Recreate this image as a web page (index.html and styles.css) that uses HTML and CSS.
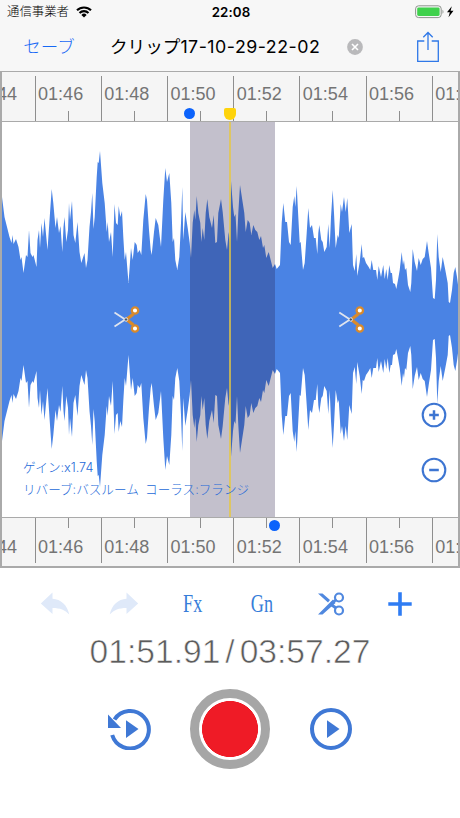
FILE: index.html
```html
<!DOCTYPE html>
<html lang="ja">
<head>
  <meta charset="UTF-8">
  <meta name="viewport" content="width=device-width, initial-scale=1.0">
  <title>クリップ17-10-29-22-02</title>
  <link rel="stylesheet" href="styles.css">
</head>
<body>
  <header>
    <div class="status-bar">
      <div class="carrier">
        <span>通信事業者</span>
        <svg width="16" height="12" viewBox="0 0 16 12" fill="none" stroke="#000" stroke-width="2.1">
          <path d="M1 4.3a10 10 0 0 1 14 0M3.5 7a6.4 6.4 0 0 1 9 0"/>
          <path d="M8 11.5 5.4 8.9a3.7 3.7 0 0 1 5.2 0z" fill="#000" stroke="none"/>
        </svg>
      </div>
      <span class="clock">22:08</span>
      <div class="battery">
        <svg width="40" height="14" viewBox="0 0 40 14">
          <rect x=".6" y=".8" width="25.6" height="11.8" rx="3" fill="none" stroke="#8d938d"/>
          <rect x="2.2" y="2.4" width="22.4" height="8.6" rx="1.4" fill="#3fd14c"/>
          <path d="M27.5 4.7c1.3.5 1.3 3.5 0 4z" fill="#8d938d"/>
          <path d="M36.8 1.2 32 7.3h2.8l-1.3 5 5-6.5h-2.9z"/>
        </svg>
      </div>
    </div>
    <nav class="nav-bar">
      <button class="save-button">セーブ</button>
      <span class="clip-name">クリップ<span class="clip-date">17-10-29-22-02</span></span>
      <button class="clear-button" aria-label="クリア">
        <svg width="16" height="16" viewBox="0 0 16 16">
          <circle cx="8" cy="8" r="7.9" fill="#b9b9bb"/>
          <path d="m5 5 6 6m0-6-6 6" stroke="#fff" stroke-width="1.6"/>
        </svg>
      </button>
      <button class="share-button" aria-label="共有">
        <svg width="24" height="32" viewBox="0 0 24 32" fill="none" stroke="#2f78e8" stroke-width="1.3">
          <path d="M8.3 10H1.7v20.3h20.6V10h-6.6M12 19V1.5M7.3 6.2 12 1.5l4.7 4.7"/>
        </svg>
      </button>
    </nav>
  </header>

  <main>
    <section class="editor">
      <div class="ruler ruler-top">
        <span>01:44</span><span>01:46</span><span>01:48</span><span>01:50</span><span>01:52</span><span>01:54</span><span>01:56</span><span>01:58</span>
      </div>

      <div class="wave">
        <svg class="wave-form" width="456" height="395" viewBox="2 122 456 395">
          <defs>
            <path id="half" d="M2 320V197L4.5 217 7 227 9.5 237 11.5 243 12.5 235 13.5 244 16 239 18.5 247 20.5 260 21.5 257 23.5 273 26 255 27.5 257 29 230 30.5 253 32.5 257 33.5 255 36.5 267 37.5 240 39 230 40 248 41.5 223 43 237 44.5 218 47.5 250 50 213 51.7 189 53.3 203 55.5 228 57 217 59 233 60.5 226 62.3 252 63.5 227 64.5 217 66.3 242 68 230 69 203 70 220 72 201 73.5 235 75.3 243 77.5 222 79.5 252 81.3 263 84.5 253 86 268 87.5 260 89.5 227 91 212 92.3 193 93.5 229 94.7 217 96.7 177 97.7 162 98.7 163 100 151 101 165 102.3 183 104.7 203 106.7 232 107.7 222 109 242 111 232 112.7 257 114.5 204 116 223 117.7 225 118.7 206 120.3 217 122 211 123.3 237 124.7 260 126 252 128.5 283 131 248 132.7 260 134.7 242 136.7 245 137.7 253 139.7 250 141.3 255 143.3 220 145.7 194 147 200 149 230 150.7 250 151.7 255 154 232 155.7 218 158.3 225 161 247 163.3 200 165.3 168 167 182 169.3 173 171.3 203 172.7 242 174 238 175.3 260 177.3 270 179.3 257 181 223 182.3 187 183.3 240 185.3 212 187.7 228 189.7 243 191 258 192.7 223 194.3 210 195.3 220 196.7 196 198.3 213 200.3 223 201.3 242 202.7 228 204.3 240 205.7 213 207.3 199 209.3 217 212 228 213.7 215 215.3 243 217 242 218.3 213 221 199 222.7 212 225.3 240 227 250 228.7 232 230 243 231 181 233 207 234.3 217 235.5 214 237 242 238.3 213 240 185 242.3 200 244.3 213 245.7 232 247.7 220 249.7 223 251.3 235 253.3 225 255.3 230 257.3 232 259.3 240 261 236 263 248 264.3 245 266.3 258 268.7 252 270.7 260 272.7 268 275 264 276.7 269 280 265 281.7 223 283.3 203 285.3 222 287 222 289 242 290.7 245 292.7 207 294.3 196 295.3 207 296.7 186 298.3 217 299.7 243 300.7 242 303 270 304.7 263 306.7 233 308.3 208 310 228 312 225 314 238 315.7 238 317.3 254 318.3 233 319.3 225 321.3 240 322.7 242 324.3 252 326.7 247 328.3 224 329.7 248 331 217 332.7 190 334 213 335.7 248 337.7 235 338.7 238 340 217 340.7 204 342 212 344 197 345.7 212 347.3 198 349.3 233 351.7 224 353 265 354.7 271 356.3 254 357.3 276 359.7 262 361.7 244 362.7 258 364 257 366 263 368.7 267 370.3 270 371.7 260 373.3 270 376 270 377.3 280 378.7 266 381 277 383.3 265 384.7 279 386.3 269 387.7 280 389.3 265 390.7 273 392 273 393 283 395 284 396.3 289 398 280 399.7 270 401.7 252 403 265 404 260 405 270 406.3 268 408 285 410.3 292 411.3 283 412.7 249 414.7 262 417 271 418.7 258 420.7 265 422.7 259 424.7 257 427 241 428.7 253 431 268 433 298 434.7 299 436 280 437.3 234 438.7 257 440.7 272 442.7 257 445.3 270 447.7 283 448.7 302 450 303 452 290 453.7 273 455.3 267 457 277 458.3 287V320z"/>
            <g id="cut" fill="none">
              <path d="M1 3 14 11.5M1 17 14 8.5" stroke="#dfe4ee" stroke-width="1.8"/>
              <path d="m13 10 7-5.5M13 10l7 5.5" stroke="#d98a2b" stroke-width="3.2"/>
              <circle cx="21.5" cy="1" r="3.2" fill="#fff" stroke="#d98a2b" stroke-width="2.3"/>
              <circle cx="21.5" cy="19" r="3.2" fill="#fff" stroke="#d98a2b" stroke-width="2.3"/>
              <circle cx="12.5" cy="10" r="1.7" fill="#555" stroke="#dfe4ee"/>
            </g>
          </defs>
          <use href="#half" fill="#4a83e4"/>
          <use href="#half" fill="#4a83e4" transform="translate(0 638) scale(1 -1)"/>
          <use href="#cut" x="113.500" y="309.500"/>
          <use href="#cut" x="338.300" y="309.500"/>
        </svg>
        <div class="selection"></div>
        <div class="playhead"></div>
        <div class="effects">
          <p>ゲイン:x1.74</p>
          <p>リバーブ:バスルーム&ensp;コーラス:フランジ</p>
        </div>
        <div class="zoom-buttons">
          <button aria-label="拡大">
            <svg width="26" height="26" viewBox="0 0 26 26" fill="none" stroke="#3d75d2" stroke-width="2.1">
              <circle cx="13" cy="13" r="11.3"/><path d="M13 8.2v9.600M8.2 13h9.600" stroke-width="2.5"/>
            </svg>
          </button>
          <button aria-label="縮小">
            <svg width="26" height="26" viewBox="0 0 26 26" fill="none" stroke="#3d75d2" stroke-width="2.1">
              <circle cx="13" cy="13" r="11.3"/><path d="M8.2 13h9.600" stroke-width="2.5"/>
            </svg>
          </button>
        </div>
      </div>

      <div class="ruler ruler-bottom">
        <span>01:44</span><span>01:46</span><span>01:48</span><span>01:50</span><span>01:52</span><span>01:54</span><span>01:56</span><span>01:58</span>
      </div>
      <i class="handle handle-start"></i>
      <i class="handle handle-end"></i>
      <i class="handle-play"></i>
    </section>

    <div class="tools">
      <button class="disabled" aria-label="元に戻す">
        <svg width="30" height="24" viewBox="0 0 30 24"><path d="M.8 11.500 12.500.5v6.300c8.500.5 14.500 6 16.800 15.700-4.500-4.500-9-6.500-16.800-6.500v6z" fill="#dfe9f9"/></svg>
      </button>
      <button class="disabled" aria-label="やり直す">
        <svg width="30" height="24" viewBox="0 0 30 24"><path d="M29.200 11.500 17.500.5v6.300C9 7.300 3 12.800.7 22.500 5.200 18 9.700 16 17.500 16v6z" fill="#dfe9f9"/></svg>
      </button>
      <button class="text-tool"><span>Fx</span></button>
      <button class="text-tool"><span>Gn</span></button>
      <button aria-label="カット">
        <svg width="28" height="24" viewBox="0 0 28 24" fill="none" stroke="#5088df">
          <path d="M1 1.500h4.500l7.500 6.500-2 2.500zM1 22.500h4.500L18.500 11 16 7.500z" fill="#5088df" stroke="none"/>
          <path d="m14 12.500 5 3.500" stroke-width="2.800"/>
          <path d="m14.500 11.500 5-4" stroke-width="2.800"/>
          <circle cx="22" cy="5.500" r="4" stroke-width="2.200"/>
          <circle cx="22" cy="18.500" r="4" stroke-width="2.200"/>
        </svg>
      </button>
      <button aria-label="追加">
        <svg width="24" height="24" viewBox="0 0 24 24" stroke="#2f7cf3" stroke-width="3.600"><path d="M12 .3v23.400M.3 12h23.400"/></svg>
      </button>
    </div>

    <div class="time">
      <span>01:51.91</span><span class="slash">/</span><span>03:57.27</span>
    </div>

    <div class="transport">
      <button aria-label="最初から再生">
        <svg width="44" height="42" viewBox="0 0 44 42">
          <path d="M7.500 11.500A18.700 18.700 0 1 1 5.200 27" fill="none" stroke="#3f78d5" stroke-width="4"/>
          <path d="M1 6.500V20h13zM19 12.300v17.600L31.500 21z" fill="#3f78d5"/>
        </svg>
      </button>
      <button class="record-button" aria-label="録音"></button>
      <button aria-label="再生">
        <svg width="44" height="42" viewBox="0 0 44 42">
          <circle cx="22" cy="21" r="19" fill="none" stroke="#3f78d5" stroke-width="4"/>
          <path d="M18 12.300v17.600L30.500 21z" fill="#3f78d5"/>
        </svg>
      </button>
    </div>
  </main>
</body>
</html>
```
FILE: styles.css
```css
* {
  box-sizing: border-box;
}

body {
  margin: 0;
  height: 818px;
  overflow: hidden;
  background-color: #fff;
  color: #000;
  font-family: Inter, "Noto Sans CJK JP", sans-serif;
}

button {
  display: flex;
  align-items: center;
  justify-content: center;
  padding: 0;
  border: none;
  background: none;
  font-family: inherit;
  cursor: pointer;
}

svg {
  display: block;
}

header {
  height: 71px;
  background-color: #f7f7f7;
}

.status-bar {
  display: grid;
  grid-template-columns: 1fr auto 1fr;
  align-items: center;
  height: 24px;
  padding: 0 5px 0 7px;
  font-size: 12.4px;
  line-height: 24px;
}

.carrier {
  display: flex;
  align-items: center;
  gap: 7px;
  font-weight: 300;
}

.clock {
  font-size: 13.3px;
  font-weight: 600;
  letter-spacing: 0.1px;
}

.battery {
  justify-self: end;
}

.nav-bar {
  display: flex;
  align-items: center;
  height: 46px;
  padding: 0 20px 0 23px;
}

.save-button {
  width: 52px;
  color: #1769f5;
  font-size: 17.5px;
  font-weight: 300;
  line-height: 44px;
}

.clip-name {
  width: 211px;
  margin: -3px 0 0 35px;
  font-size: 17.6px;
  white-space: nowrap;
}

.clip-date {
  font-size: 17.8px;
  letter-spacing: 0.5px;
}

.clear-button {
  margin: 0 0 0 26px;
}

.share-button {
  margin-left: auto;
}

.editor {
  position: relative;
  height: 497px;
  border: 2px solid #aaa;
  border-width: 1px 2px 2px;
  overflow: hidden;
}

.ruler {
  display: flex;
  height: 50px;
  background-color: #f5f5f5;
  color: #747474;
  font: 18px/32px "Liberation Sans", sans-serif;
  overflow: hidden;
}

.ruler span {
  position: relative;
  flex: 0 0 66.2px;
  height: 45px;
  padding-left: 2.5px;
  border-left: 1.5px solid #8e8e8e;
}

.ruler span:first-child {
  margin-left: -33.6px;
}

.ruler span::after {
  content: "";
  position: absolute;
  left: 32px;
  width: 1px;
  height: 10px;
  background-color: #8e8e8e;
}

.ruler-top {
  align-items: flex-end;
  border-bottom: 1px solid #aaa;
}

.ruler-top span {
  padding-top: 2px;
}

.ruler-top span::after {
  bottom: 0;
}

.ruler-bottom {
  border-top: 1px solid #aaa;
}

.ruler-bottom span {
  padding-top: 13px;
}

.ruler-bottom span::after {
  top: 0;
}

.wave {
  position: relative;
  height: 395px;
}

.selection {
  position: absolute;
  top: 0;
  left: 188px;
  width: 85px;
  height: 100%;
  background-color: rgba(32, 22, 66, 0.27);
}

.playhead {
  position: absolute;
  top: 0;
  left: 227px;
  width: 2px;
  height: 100%;
  background-color: rgba(231, 200, 64, 0.75);
}

.effects {
  position: absolute;
  top: 335px;
  left: 21px;
  color: #2469d8;
  font-size: 12.6px;
  font-weight: 300;
  line-height: 22px;
  white-space: nowrap;
}

.effects p {
  margin: 0;
}

.zoom-buttons {
  position: absolute;
  top: 280px;
  right: 11px;
  display: grid;
  gap: 29px;
}

.handle {
  position: absolute;
  width: 11px;
  height: 11px;
  border-radius: 50%;
  background-color: #0b62fb;
}

.handle-start {
  top: 36px;
  left: 182px;
}

.handle-end {
  top: 448px;
  left: 267px;
}

.handle-play {
  position: absolute;
  top: 36px;
  left: 222px;
  width: 12px;
  height: 12px;
  border-radius: 2px 2px 6px 6px;
  background-color: #fed30b;
}

.tools {
  display: grid;
  grid-template-columns: repeat(6, 69px);
  justify-content: center;
  height: 36px;
  margin-top: 18px;
  padding-right: 5px;
}

.text-tool {
  color: #377dd9;
  font: 26px "Liberation Serif", serif;
}

.text-tool span {
  transform: scaleX(0.7);
}

/* white stroke over the fill gives the digits a light weight */
.time {
  display: flex;
  justify-content: center;
  height: 58px;
  color: #5c5c5c;
  font: 33.6px/60px "Liberation Sans", sans-serif;
  -webkit-text-stroke: 0.6px #fff;
}

.slash {
  margin: 0 5px;
}

.transport {
  display: flex;
  align-items: center;
  justify-content: center;
  gap: 39px;
  margin-top: 9px;
}

.record-button {
  width: 80px;
  height: 80px;
  border: 9px solid #a6a6a6;
  border-radius: 50%;
  background: radial-gradient(circle, #ef1b26 27.7px, #fff 28.3px);
}
```
